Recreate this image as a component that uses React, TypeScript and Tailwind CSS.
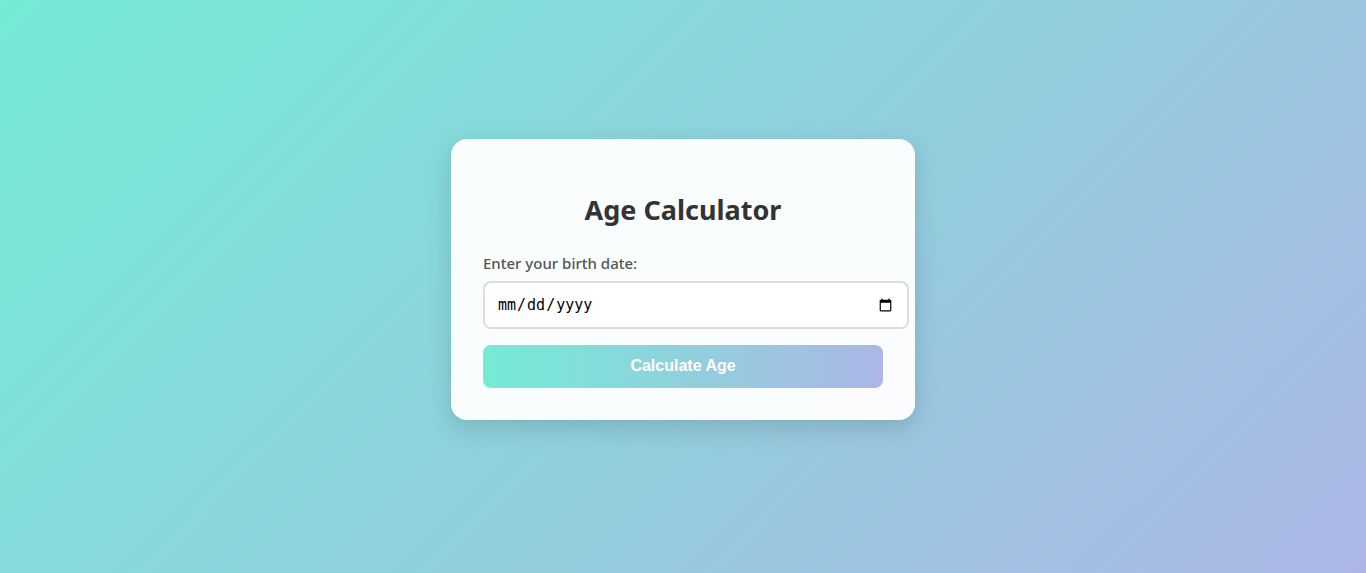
export default function App() {
  return (
    <div className="flex min-h-screen items-center justify-center bg-[linear-gradient(135deg,#74ebd5,#acb6e5)] font-['Noto_Sans','Open_Sans',sans-serif]">
      <main className="mb-3.5 w-full max-w-[464px] rounded-2xl bg-white/95 px-8 pt-13 pb-8 shadow-[0_8px_24px_rgba(0,0,0,0.15)]">
        <h1 className="mb-6 text-center text-[27px] leading-[38px] font-bold text-[#333]">Age Calculator</h1>
        <form onSubmit={(e) => e.preventDefault()}>
          <label htmlFor="birth" className="mb-2 block text-[15px] leading-5 font-medium text-[#555]">
            Enter your birth date:
          </label>
          <input
            id="birth"
            type="date"
            className="mb-4 block h-12 w-[calc(100%+26px)] rounded-lg border-2 border-[#ddd] bg-white px-3 font-['DejaVu_Sans_Mono',monospace] text-[15px] text-black"
          />
          <button
            type="submit"
            className="block h-[43px] w-full rounded-lg bg-[linear-gradient(to_right,#74ebd5,#acb6e5)] pb-0.5 font-['Liberation_Sans',sans-serif] text-base font-bold text-white"
          >
            Calculate Age
          </button>
        </form>
      </main>
    </div>
  );
}
